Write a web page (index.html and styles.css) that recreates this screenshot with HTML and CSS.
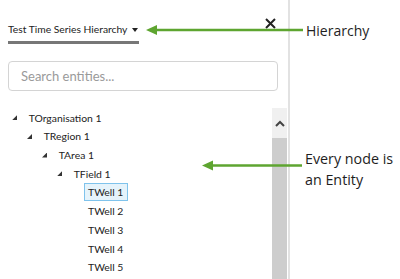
FILE: index.html
```html
<!DOCTYPE html>
<html lang="en">
<head>
  <meta charset="UTF-8" />
  <title>Hierarchy</title>
  <link rel="stylesheet" href="styles.css">
</head>
<body>

<div class="panel">
  <div class="cabecalho">
    <div class="seletor">
      <span class="seletor-texto">Test Time Series Hierarchy</span>
      <span class="seta-baixo"></span>
    </div>
    <svg class="fechar" width="11" height="11" viewBox="0 0 11 11">
      <path d="M1 1 L10 10 M10 1 L1 10" stroke="#222" stroke-width="2" fill="none"/>
    </svg>
  </div>

  <div class="busca">Search entities...</div>

  <div class="arvore-area">
    <div class="arvore">
      <div class="no nivel0"><span class="expandido"></span><span class="rotulo">TOrganisation 1</span></div>
      <div class="no nivel1"><span class="expandido"></span><span class="rotulo">TRegion 1</span></div>
      <div class="no nivel2"><span class="expandido"></span><span class="rotulo">TArea 1</span></div>
      <div class="no nivel3"><span class="expandido"></span><span class="rotulo">TField 1</span></div>
      <div class="no nivel4"><span class="folha"></span><span class="rotulo selecionado">TWell 1</span></div>
      <div class="no nivel4"><span class="folha"></span><span class="rotulo">TWell 2</span></div>
      <div class="no nivel4"><span class="folha"></span><span class="rotulo">TWell 3</span></div>
      <div class="no nivel4"><span class="folha"></span><span class="rotulo">TWell 4</span></div>
      <div class="no nivel4"><span class="folha"></span><span class="rotulo">TWell 5</span></div>
    </div>
    <div class="rolagem">
      <div class="rolagem-botao">
        <svg width="10" height="7" viewBox="0 0 10 7">
          <path d="M1 6 L5 2 L9 6" stroke="#444" stroke-width="2" fill="none"/>
        </svg>
      </div>
      <div class="rolagem-polegar"></div>
    </div>
  </div>
</div>

<!-- anotacoes por cima da captura -->
<div class="anotacoes">
  <svg class="setas" width="400" height="279" viewBox="0 0 400 279">
    <polygon points="146,30 157,25 157,35" fill="#5ea530"/>
    <line x1="155" y1="30" x2="303" y2="30" stroke="#5ea530" stroke-width="2.5"/>
    <polygon points="202,165.5 213,160.5 213,170.5" fill="#5ea530"/>
    <line x1="211" y1="165.5" x2="302" y2="165.5" stroke="#5ea530" stroke-width="2.5"/>
  </svg>
  <div class="nota nota-hierarquia">Hierarchy</div>
  <div class="nota nota-entidade">Every node is<br>an Entity</div>
</div>

</body>
</html>
```

FILE: styles.css
```css
body {
  margin: 0;
  width: 400px;
  height: 279px;
  overflow: hidden;
  background-color: #fff;
  font-family: "Open Sans", "Noto Sans", sans-serif;
  color: #222;
  position: relative;
}

.panel {
  width: 288px;
  height: 279px;
  border-right: 2px solid #e2e2e2;
  display: flex;
  flex-direction: column;
  font-family: Lato, "Open Sans", sans-serif;
}

.cabecalho {
  display: flex;
  justify-content: space-between;
  align-items: flex-start;
  padding: 21px 12px 0 8px;
}

.seletor {
  display: flex;
  align-items: center;
  height: 16px;
  padding-bottom: 4px;
  border-bottom: 3px solid #777;
}

.seletor-texto {
  font-size: 10.3px;
  line-height: 16px;
}

.seta-baixo {
  width: 0;
  height: 0;
  margin: 2px 1px 0 5px;
  border-left: 3.5px solid transparent;
  border-right: 3.5px solid transparent;
  border-top: 4px solid #222;
}

.fechar {
  margin-top: -3px;
}

.busca {
  margin: 17px 10px 0 8px;
  height: 28px;
  border: 1px solid #d4d4d4;
  border-radius: 4px;
  padding-left: 12px;
  font-size: 13px;
  line-height: 28px;
  color: #9a9a9a;
}

.arvore-area {
  margin-top: 17px;
  flex: 1;
  display: flex;
  min-height: 0;
}

.arvore {
  flex: 1;
  padding-top: 0.35px;
}

.no {
  display: flex;
  align-items: center;
  height: 18.7px;
  padding-left: 12px;
  font-size: 10.4px;
}

.nivel1 { padding-left: 27px; }
.nivel2 { padding-left: 42px; }
.nivel3 { padding-left: 57px; }
.nivel4 { padding-left: 72px; }

.expandido {
  width: 5px;
  height: 5px;
  margin-right: 7.7px;
  background-color: #333;
  clip-path: polygon(100% 0, 100% 100%, 0 100%);
}

.folha {
  width: 5px;
  margin-right: 7px;
}

.rotulo {
  height: 16px;
  line-height: 16px;
  padding: 0 3px;
  border: 1px solid transparent;
}

.rotulo.selecionado {
  background-color: #e5f3fb;
  border-color: #7fc3ec;
  padding-right: 4px;
}

.rolagem {
  width: 15px;
  margin-right: 1px;
  background-color: #f0f0f0;
  display: flex;
  flex-direction: column;
}

.rolagem-botao {
  height: 30px;
  display: flex;
  align-items: center;
  justify-content: center;
}

.rolagem-polegar {
  flex: 1;
  background-color: #cdcdcd;
}

.anotacoes {
  position: absolute;
  top: 0;
  left: 0;
  width: 400px;
  height: 279px;
  pointer-events: none;
}

.setas {
  position: absolute;
  top: 0;
  left: 0;
}

.nota {
  position: absolute;
  font-size: 14px;
  line-height: 21px;
  color: #1e1e1e;
}

.nota-hierarquia {
  left: 306px;
  top: 20px;
}

.nota-entidade {
  left: 305px;
  top: 148px;
  font-size: 14.3px;
}
```
